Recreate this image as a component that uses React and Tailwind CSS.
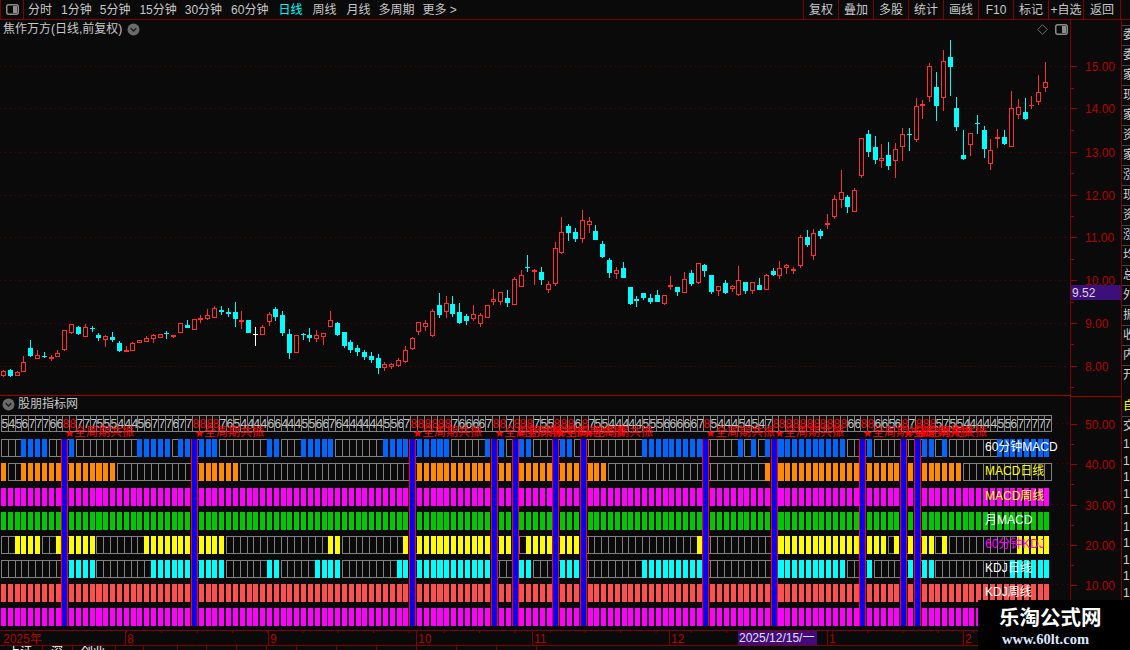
const P = 6.82;

// [color, wickTop, bodyTop, bodyBottom, wickBottom], one per bar, in chart pixels
const CANDLES = [
  ["r",370,370.5,375,377],["c",369,370,376,377],["r",371,371.5,375,376],["r",356,362,372,372],["c",340,348,356,357],
  ["r",350,355,358.5,358.5],["c",352,356,357,358],["r",355,357,358.5,361],["r",350,353,357,357],["r",330,330,350,351],
  ["r",324,324,333,334],["c",326,327,334,335],["r",324,327,337,337],["c",326,328,329,332],["c",333,335,338,341],
  ["r",335,336,340,347],["c",332,337,340,342],["c",341,343,351,352],["r",346,350,352,352],["r",342,343,351,351],
  ["r",340,340,343,343],["r",336,338,342,342],["r",334,335,339,343],["r",334,334,338,338],["c",331,333,334,339],
  ["r",335,335,337,338],["r",323,323,333,333],["c",320,325,328,328],["r",319,319,330,330],["r",315,318,320,323],
  ["r",309,315,319,320],["r",306,308,318,318],["c",306,310,312,315],["c",308,312,314,317],["c",302,312,319,327],
  ["r",311,320,322,329],["c",320,320,333,333],["w",327,334,335,346],["r",325,327,335,335],["r",312,314,322,326],
  ["c",307,309,317,321],["c",311,315,333,336],["c",329,334,353,359],["r",335,335,353,353],["c",333,334,335,340],
  ["c",328,335,338,342],["r",330,335,339,342],["r",333,333,337,345],["r",311,320,327,327],["c",322,323,335,336],
  ["c",332,332,346,348],["c",340,342,350,353],["c",345,348,352,356],["c",350,352,357,360],["c",352,356,360,363],
  ["c",354,358,368,374],["r",362,364,368,371],["r",363,364,367,369],["r",358,360,366,367],["r",346,350,362,363],
  ["r",337,338,349,350],["r",322,322,332,335],["r",320,323,327,331],["r",309,311,336,337],["c",293,305,315,318],
  ["r",296,303,312,318],["c",296,304,314,317],["c",303,312,323,324],["c",314,316,321,325],["r",305,314,319,321],
  ["r",313,315,324,327],["r",305,305,318,318],["r",289,299,302,305],["r",292,292,302,305],["c",290,298,303,307],
  ["r",277,279,305,305],["r",270,275,287,287],["c",255,267,268,272],["r",269,270,272,285],["c",267,272,280,285],
  ["r",281,284,290,293],["r",242,248,284,286],["r",217,232,253,254],["c",224,226,233,241],["c",228,232,239,242],
  ["r",210,220,239,243],["r",217,221,225,233],["c",225,231,240,240],["c",241,244,257,258],["c",258,260,273,278],
  ["r",267,270,274,279],["c",262,268,278,278],["c",287,287,304,305],["c",296,299,301,307],["c",293,293,298,300],
  ["c",294,298,302,304],["c",290,295,302,302],["r",295,295,304,305],["r",276,285,287,290],["c",287,287,292,296],
  ["r",272,279,293,293],["c",270,273,284,286],["r",263,263,283,284],["c",264,265,271,277],["c",275,275,292,294],
  ["r",286,286,291,296],["c",280,283,293,294],["r",285,286,289,292],["r",266,280,295,296],["c",282,282,291,294],
  ["r",282,282,291,294],["c",278,285,290,290],["r",274,275,290,290],["c",268,271,275,276],["r",261,268,276,279],
  ["r",264,265,268,274],["r",267,269,271,274],["r",235,237,266,268],["c",230,237,245,247],["r",229,233,256,260],
  ["c",229,231,236,239],["r",214,223,225,229],["r",195,199,217,219],["r",170,192,200,208],["c",195,197,207,213],
  ["r",188,190,212,212],["r",138,138,176,178],["c",130,134,152,157],["c",136,147,160,164],["r",144,158,161,168],
  ["c",142,155,166,170],["r",143,149,161,178],["r",128,134,147,161],["c",128,134,135,151],["r",98,106,140,142],
  ["r",100,104,106,119],["r",63,66,97,102],["c",72,87,106,121],["r",50,61,98,111],["c",40,57,67,96],
  ["c",97,108,127,131],["c",130,155,159,160],["r",133,133,145,156],["c",115,123,124,134],["c",126,130,149,158],
  ["r",139,150,164,170],["r",129,137,139,148],["c",130,137,144,145],["r",91,108,147,147],["r",99,107,115,119],
  ["c",98,112,119,120],["r",96,105,106,109],["r",75,92,102,105],["r",62,82,88,92],
];

const GRID = [66, 108, 151.5, 194.5, 237, 280, 322.5, 365.5];
const PRICES = ["15.00", "14.00", "13.00", "12.00", "11.00", "10.00", "9.00", "8.00"];

const DIGITS =
  "545677766" + "88" + "77755544456777677" + "8888" + "765444466444" + "5566764444445567" +
  "888888" + "766667" + "88" + "7" + "888" + "755" + "888" + "6" + "8" + "75544444555666667" +
  "8" + "544454547" + "88888888888" + "66" + "88" + "6656" + "8" + "7" + "888" + "57554444455677777";

const BANDS = [9, 28, 60, 72, 75, 81, 85, 103, 113, 126, 132, 134];

// inclusive index ranges of the filled cells, everything else stays a gray box
const ROWS = [
  { y: 440, color: "#0066ff", on: [[3,6],[10,10],[20,24],[26,27],[29,31],[39,40],[44,48],[56,59],[61,65],[71,71],[73,73],[76,77],[82,83],[94,102],[108,108],[110,110],[112,112],[114,123],[127,127],[135,136],[138,138],[146,153]] },
  { y: 464, color: "#ff8c00", on: [[0,0],[3,8],[10,16],[29,34],[61,71],[73,74],[76,80],[82,84],[86,88],[112,112],[114,125],[127,140]] },
  { y: 489, color: "#ff00ff", on: [[0,153]] },
  { y: 513, color: "#00c800", on: [[0,153]] },
  { y: 537, color: "#ffff00", on: [[2,5],[8,8],[10,13],[21,27],[29,32],[48,49],[59,59],[61,71],[73,74],[77,80],[82,84],[102,102],[114,129],[131,131],[133,133],[135,136],[138,138],[149,153]] },
  { y: 561, color: "#00ffff", on: [[10,13],[22,27],[29,32],[39,40],[46,49],[58,59],[61,71],[76,77],[82,84],[94,102],[114,123],[127,127],[133,133],[135,136],[148,153]] },
  { y: 585, color: "#ff5050", on: [[0,153]] },
  { y: 609, color: "#ff00ff", on: [[0,153]] },
];

const LABELS = [
  { y: 452, text: "60分钟MACD", color: "#ffffff" },
  { y: 476, text: "MACD日线", color: "#ffff00" },
  { y: 501, text: "MACD周线", color: "#ffff00" },
  { y: 525, text: "月MACD", color: "#ffffff" },
  { y: 549, text: "60分钟KDJ", color: "#ff00ff" },
  { y: 573, text: "KDJ日线", color: "#ffffff" },
  { y: 597, text: "KDJ周线", color: "#ffffff" },
];

const PERIODS = [
  { t: "分时", c: "ml-[4px]" },
  { t: "1分钟", c: "ml-[9px]" },
  { t: "5分钟", c: "ml-[8px]" },
  { t: "15分钟", c: "ml-[9px]" },
  { t: "30分钟", c: "ml-[8px]" },
  { t: "60分钟", c: "ml-[9px]" },
  { t: "日线", c: "ml-[10px] text-[#00ffff]" },
  { t: "周线", c: "ml-[10px]" },
  { t: "月线", c: "ml-[10px]" },
  { t: "多周期", c: "ml-[8px]" },
  { t: "更多 >", c: "ml-[8px]" },
];

const ACTIONS = ["复权", "叠加", "多股", "统计", "画线", "F10", "标记", "+自选"];

const SIDE_TOP = ["委", "委", "家", "现", "家", "资", "家", "涨", "现", "资", "涨", "均", "总", "外", "振", "收", "内", "开"];
const STATUS = [43, 30, 43, 28, 34, 29, 30, 30, 30, 40, 40, 40, 40, 40, 40];
const STATUS_TEXT = ["上证", "深", "创业", "", "", "", "", "", "", "", "", "", "", "", ""];

const CANDLE_COLORS = { r: "#ff3232", c: "#00ffff", w: "#ffffff" };

function isOn(row, i) {
  return row.on.some(([a, b]) => i >= a && i <= b);
}

function PanelIcon({ className }) {
  return (
    <svg width="13" height="11" viewBox="0 0 13 11" className={className}>
      <rect x="0.75" y="0.75" width="11.5" height="9.5" rx="2" fill="none" stroke="#8c8c8c" strokeWidth="1.5" />
      <rect x="7" y="2" width="4" height="7" fill="#8c8c8c" />
    </svg>
  );
}

function ChevronDot({ className }) {
  return (
    <svg width="13" height="13" viewBox="0 0 13 13" className={className}>
      <circle cx="6.5" cy="6.5" r="6" fill="#6a6a6a" />
      <path d="M3.7 5.2 6.5 8 9.3 5.2" fill="none" stroke="#1c1c1c" strokeWidth="1.4" />
    </svg>
  );
}

function Candle({ c, i }) {
  const [kind, wt, bt, bb, wb] = c;
  const color = CANDLE_COLORS[kind];
  const cx = Math.round(3 + 6.81 * i);
  const h = bb - bt;
  return (
    <g>
      <rect x={cx} y={Math.round(wt)} width="1" height={Math.max(1, Math.round(wb - wt))} fill={color} />
      {h <= 2 ? (
        <rect x={cx - 2} y={Math.round(bt)} width="5" height={Math.max(1, Math.round(h))} fill={color} />
      ) : kind === "c" ? (
        <rect x={cx - 2} y={Math.round(bt)} width="5" height={Math.round(h)} fill={color} />
      ) : (
        <rect x={cx - 1.5} y={Math.round(bt) + 0.5} width="4" height={Math.round(h) - 1} fill="#0a0a0a" stroke={color} />
      )}
    </g>
  );
}

function PriceChart() {
  return (
    <div className="relative h-[376px] border-b border-[#a00000]">
      <svg width="1070" height="375" viewBox="0 20 1070 375" className="block">
        {GRID.map((y) => (
          <line key={y} x1="0" x2="1070" y1={Math.round(y) + 0.5} y2={Math.round(y) + 0.5} stroke="#5a0000" strokeDasharray="1 4" />
        ))}
        {CANDLES.map((c, i) => (
          <Candle key={i} c={c} i={i} />
        ))}
      </svg>
      <div className="absolute left-[3px] top-[1px] flex items-center text-[12px] leading-[17px] text-[#c8c8c8]">
        <span>焦作万方(日线,前复权)</span>
        <ChevronDot className="ml-[5px]" />
      </div>
      <svg width="11" height="11" viewBox="0 0 11 11" className="absolute left-[1037px] top-[4px]">
        <path d="M5.5 .7 10.3 5.5 5.5 10.3 .7 5.5Z" fill="none" stroke="#6e6e6e" />
      </svg>
      <PanelIcon className="absolute left-[1055px] top-[4px]" />
    </div>
  );
}

function Strips() {
  return (
    <svg width="1070" height="233" viewBox="0 397 1070 233" className="block">
      {[424, 464, 505, 545, 585].map((y) => (
        <line key={y} x1="1052" x2="1070" y1={y + 0.5} y2={y + 0.5} stroke="#5a0000" strokeDasharray="1 4" />
      ))}
      {DIGITS.split("").map((d, i) => {
        const x0 = Math.round(P * i + 1);
        const x1 = Math.round(P * (i + 1) + 1);
        return (
          <g key={i}>
            <rect x={x0 + 0.5} y="416.5" width={x1 - x0} height="16" fill="#0a0a0a" stroke="#808080" />
            <text x={x0 + 0.5} y="429" fontSize="12" fill={d === "8" ? "#ff0000" : "#c8c8c8"}>{d}</text>
          </g>
        );
      })}
      {ROWS.map((row) =>
        Array.from({ length: 154 }, (_, i) => {
          const x0 = Math.round(P * i + 1);
          const x1 = Math.round(P * (i + 1) + 1);
          if (isOn(row, i)) {
            return <rect key={row.y + "-" + i} x={x0} y={row.y} width={Math.round(P * (i + 1) - 0.8) - x0} height="18" fill={row.color} />;
          }
          return <rect key={row.y + "-" + i} x={x0 + 0.5} y={row.y + 0.5} width={x1 - x0} height="17" fill="none" stroke="#808080" />;
        })
      )}
      {BANDS.map((i) => {
        const x = Math.round(P * i);
        return (
          <g key={i}>
            <rect x={x} y="440" width="7" height="187" fill="#0000ff" />
            <rect x={x} y="440" width="1" height="187" fill="#ff0000" />
            <rect x={x + 6} y="440" width="1" height="187" fill="#ff0000" />
          </g>
        );
      })}
      {BANDS.map((i) => {
        const x = Math.round(P * i);
        return (
          <g key={i} fill="#ff0000">
            <text x={x + 4} y="437" fontSize="9">★</text>
            <text x={x + 13} y="437" fontSize="12">全周期共振</text>
          </g>
        );
      })}
      {LABELS.map((l) => (
        <text key={l.y} x="985" y={l.y} fontSize="12" fill={l.color}>{l.text}</text>
      ))}
    </svg>
  );
}

function IndicatorPanel() {
  return (
    <div className="relative h-[233px]">
      <Strips />
      <div className="absolute left-[2px] top-[1px] flex items-center text-[12px] leading-[15px] text-[#c8c8c8]">
        <ChevronDot />
        <span className="ml-[3px]">股朋指标网</span>
      </div>
    </div>
  );
}

function PriceAxis() {
  const ticks = [424, 464, 505, 545, 585];
  const lower = ["50.00", "40.00", "30.00", "20.00", "10.00"];
  return (
    <svg width="50" height="610" viewBox="1071 20 50 610" className="block">
      {GRID.map((y, i) => (
        <g key={y}>
          <rect x="1071" y={Math.round(y)} width="6" height="1" fill="#a00000" />
          <rect x="1071" y={Math.round(y + 21.5)} width="3" height="1" fill="#a00000" />
          <text x="1085" y={Math.round(y) + 5} fontSize="12" fill="#b40000">{PRICES[i]}</text>
        </g>
      ))}
      <rect x="1071" y="396" width="50" height="1" fill="#a00000" />
      {ticks.map((y, i) => (
        <g key={y}>
          <rect x="1071" y={y} width="6" height="1" fill="#a00000" />
          <rect x="1071" y={y + 20} width="3" height="1" fill="#a00000" />
          <text x="1085" y={y + 5} fontSize="12" fill="#b40000">{lower[i]}</text>
        </g>
      ))}
      <rect x="1071" y="285" width="50" height="15" fill="#3d0f7a" />
      <text x="1072" y="297" fontSize="12" fill="#d8d8d8">9.52</text>
    </svg>
  );
}

function SideColumn() {
  return (
    <div className="w-[9px] overflow-hidden border-l border-[#800000] pt-[5px] text-[12px] text-[#d0d0d0]">
      {SIDE_TOP.map((t, i) => (
        <div key={i} className="h-[20px] border-t border-[#444] pl-[1px] leading-[19px] whitespace-nowrap">{t}</div>
      ))}
      <div className="mt-[11px] h-[20px] pl-[1px] leading-[20px] text-[#ffff00]">自</div>
      <div className="h-[20px] border-t border-[#444] pl-[1px] leading-[19px]">交</div>
      {Array.from({ length: 11 }, (_, i) => (
        <div key={i} className="h-[16.5px] pl-[1px] leading-[16px]">1</div>
      ))}
    </div>
  );
}

function DateAxis() {
  const months = [
    { x: 127, t: "8" }, { x: 270, t: "9" }, { x: 418, t: "10" }, { x: 534, t: "11" },
    { x: 671, t: "12" }, { x: 829, t: "1" }, { x: 965, t: "2" },
  ];
  return (
    <svg width="1130" height="16" viewBox="0 630 1130 16" className="block">
      <rect x="0" y="630" width="1130" height="1" fill="#800000" />
      <rect x="0" y="645" width="1130" height="1" fill="#800000" />
      {Array.from({ length: 30 }, (_, i) => (
        <rect key={i} x={126 + i * 35.3} y="631" width="1" height="2" fill="#800000" />
      ))}
      <text x="3" y="643" fontSize="12" fill="#b40000">2025年</text>
      {months.map((m) => (
        <g key={m.x}>
          <rect x={m.x - 2} y="631" width="1" height="14" fill="#800000" />
          <text x={m.x} y="643" fontSize="12" fill="#b40000">{m.t}</text>
        </g>
      ))}
      <rect x="738" y="631" width="79" height="14" fill="#400a80" />
      <text x="739" y="642" fontSize="12" fill="#e0e0e0">2025/12/15/一</text>
    </svg>
  );
}

function Watermark() {
  return (
    <div className="absolute bottom-0 right-0 flex h-[50px] w-[152px] flex-col bg-black pl-[21px] pt-[5px] text-white">
      <span className="font-['Liberation_Serif','Noto_Sans_CJK_SC',serif] text-[20.5px] font-bold leading-[26px] whitespace-nowrap">乐淘公式网</span>
      <span className="pl-[3px] font-['Liberation_Serif',serif] text-[14.5px] font-bold leading-[16px] text-[#dce8ff]">www.60lt.com</span>
    </div>
  );
}

export default function App() {
  return (
    <div className="relative h-[650px] w-[1130px] overflow-hidden bg-[#0a0a0a] font-['Liberation_Sans','Noto_Sans_CJK_SC',sans-serif] text-[12px]">
      {/* period bar */}
      <div className="flex h-[20px] items-center border-b border-[#800000] text-[#c8c8c8]">
        <div className="flex h-full w-[24px] items-center justify-center border-x border-[#800000]">
          <PanelIcon />
        </div>
        {PERIODS.map((p) => (
          <span key={p.t} className={p.c}>{p.t}</span>
        ))}
        <div className="ml-auto mr-[9px] flex h-full border-l border-[#800000]">
          {ACTIONS.map((a) => (
            <span key={a} className="flex w-[35px] items-center justify-center border-r border-[#800000] whitespace-nowrap">{a}</span>
          ))}
          <span className="flex w-[37px] items-center justify-center border-r border-[#800000]">返回</span>
        </div>
      </div>

      <div className="flex h-[610px]">
        <div className="w-[1070px]">
          <PriceChart />
          <IndicatorPanel />
        </div>
        <div className="w-[51px] border-l border-[#800000]">
          <PriceAxis />
        </div>
        <SideColumn />
      </div>

      <DateAxis />

      <div className="flex h-[4px] overflow-hidden text-white">
        {STATUS.map((w, i) => (
          <div key={i} style={{ width: w }} className="shrink-0 border-r border-[#800000] pl-[8px] leading-[12px]">{STATUS_TEXT[i]}</div>
        ))}
      </div>

      <Watermark />
    </div>
  );
}
